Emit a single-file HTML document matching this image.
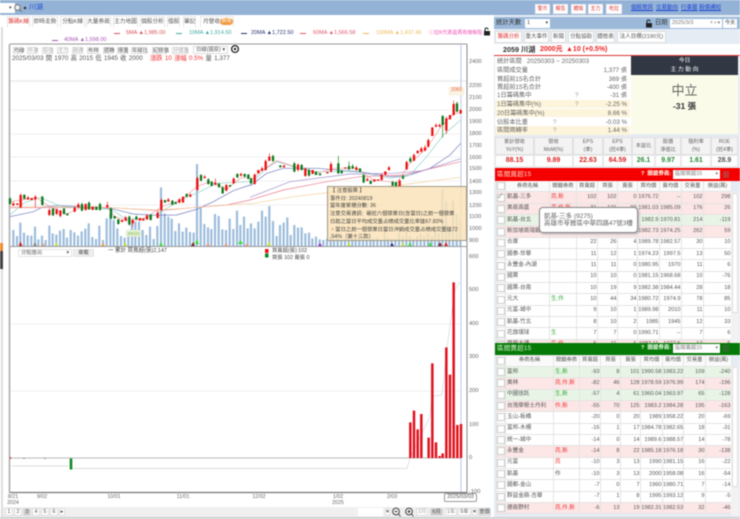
<!DOCTYPE html>
<html lang="zh-Hant"><head><meta charset="utf-8"><title>川湖</title>
<style>
html,body{margin:0;padding:0;width:740px;height:519px;overflow:hidden;background:#fff}
body{position:relative;font-family:"Liberation Sans","Noto Sans CJK TC",sans-serif;font-size:6px;color:#444;filter:blur(.4px)}
.a,.t{position:absolute}
.t{white-space:nowrap;line-height:10px}
.b{position:absolute;background:#fff;border:1px solid #ddd;box-sizing:border-box;text-align:center;line-height:6px;font-size:5.3px;color:#555;white-space:nowrap}
.m{position:absolute;white-space:nowrap;top:29px;font-size:5.5px;line-height:8px}
.m s{position:absolute;left:0;top:3.5px;width:6px;height:1px;background:currentColor}
table{position:absolute;border-collapse:collapse;table-layout:fixed;font-size:5.6px;color:#555;background:#fff}
td,th{border:1px solid #e4e4e4;padding:0 1px;overflow:hidden;white-space:nowrap;font-weight:normal;height:11.35px;line-height:9px;box-sizing:border-box}
th{text-align:center;font-size:5.3px;background:#fafafa;padding:0}
td.n{text-align:right;padding:0 .5px 0 0}td.c{padding:0}
.k{display:block;width:6px;height:6px;border:1px solid #ccc;background:#fff;margin:0 auto}
.p td{background:#fde6e6}.g td{background:#e8f5e6}
.r{color:#e33}.gr{color:#3a3}
.s{position:absolute;left:495px;width:135px;height:8.7px;line-height:9px;font-size:6.2px;color:#666}
.s i{position:absolute;left:2px;font-style:normal}.s b{position:absolute;right:3px;font-weight:normal}.s u{position:absolute;left:58px;text-decoration:none;color:#999}
.y{background:#fdf4dc}
.h{position:absolute;top:137px;height:18px;background:#f3f3f3;border:1px solid #e0e0e0;box-sizing:border-box;text-align:center;font-size:5.2px;line-height:7.5px;color:#666;padding-top:1px}
.v{position:absolute;top:155px;height:12px;background:#fff;border:1px solid #e8e8e8;box-sizing:border-box;text-align:center;font-size:7px;font-weight:bold;line-height:10px}
.tab{position:absolute;top:16px;height:11px;line-height:11px;background:#fff;border:1px solid #e5e5e5;border-bottom:0;box-sizing:border-box;text-align:center;font-size:5.7px;color:#555;white-space:nowrap}
.tr{position:absolute;top:31px;height:12px;line-height:11px;background:#fff;border:1px solid #ddd;box-sizing:border-box;text-align:center;font-size:5.5px;color:#555;white-space:nowrap}
.ax{position:absolute;left:469px;font-size:5.7px;line-height:8px;color:#666}
.ds{position:absolute;font-size:5.3px;line-height:6px;color:#666;text-align:center}
.bt{position:absolute;top:4px;height:10px;line-height:9px;background:#fff;text-align:center;font-size:5px;color:#d33;border:1px solid #eee;box-sizing:border-box}
.l{position:absolute;top:4px;font-size:5.5px;line-height:9px;color:#1a3fd0;text-decoration:underline;white-space:nowrap}
</style></head><body>

<!-- top bar -->
<div class="a" style="left:0;top:0;width:740px;height:15px;background:#93b2d6"></div>
<div class="a" style="left:0;top:3px;width:15px;height:10px;background:#fff"></div>
<div class="t" style="left:9px;top:3px;font-size:5px">▾</div>
<svg class="a" style="left:13px;top:3px" width="14" height="10"><circle cx="4.5" cy="4.5" r="2.8" fill="#eee" stroke="#777"/><path d="M6.500 6.500L9 9" stroke="#777"/><path d="M10.500 5h3M12 3.500v3" stroke="#333"/></svg>
<div class="t" style="left:29px;top:3px;font-size:7px;color:#1f4fd8;line-height:10px">川湖</div>
<div class="bt" style="left:535px;width:15px">警示</div>
<div class="bt" style="left:553px;width:15px">報告</div>
<div class="bt" style="left:571px;width:15px">體檢</div>
<div class="bt" style="left:588px;width:15px">主力</div>
<div class="bt" style="left:606px;width:16px">吃拉</div>
<div class="l" style="left:631px">個股資訊</div>
<div class="l" style="left:656px">交易動向</div>
<div class="l" style="left:681px">行事曆</div>
<div class="l" style="left:699px">股價通知</div>

<!-- left tabs -->
<div class="tab" style="left:7px;width:23px;color:#d33">籌碼K線</div>
<div class="tab" style="left:32px;width:26px">即時走勢</div>
<div class="tab" style="left:60px;width:25px">分點K線</div>
<div class="tab" style="left:86px;width:25px">大量券商</div>
<div class="tab" style="left:113px;width:25px">主力地圖</div>
<div class="tab" style="left:140px;width:25px">個股分析</div>
<div class="tab" style="left:167px;width:13px">借股</div>
<div class="tab" style="left:183px;width:13px">筆記</div>
<div class="tab" style="left:200px;width:34px;text-align:left;padding-left:2px">月營收</div>
<div class="a" style="left:220px;top:18px;width:13px;height:7px;border-radius:4px;background:#f29a3c;color:#fff;font-size:5px;line-height:7px;text-align:center">新增</div>

<div class="a" style="left:1px;top:27px;width:2px;height:492px;background:#ddd"></div>
<div class="a" style="left:0;top:243px;width:3px;height:8px;background:#ee8a2c"></div>
<div class="a" style="left:0;top:251px;width:3px;height:18px;background:#444"></div>

<!-- MA legend -->
<div class="m" style="left:114px;color:#d8505a;padding-left:12px"><s></s>5MA ▲1,985.00</div>
<div class="m" style="left:176px;color:#3fa9a0;padding-left:13px"><s></s>10MA ▲1,914.50</div>
<div class="m" style="left:241px;color:#27306e;padding-left:10px"><s></s>20MA ▲1,722.50</div>
<div class="m" style="left:300px;color:#e2566c;padding-left:13px"><s></s>60MA ▲1,566.58</div>
<div class="m" style="left:363px;color:#eeb957;padding-left:13px"><s></s>100MA ▲1,437.45</div>
<div class="m" style="left:429px;color:#ee4fb3;font-size:5px">ⓘ拉K代表盈再有做帳點</div>
<svg class="a" style="left:483px;top:27px" width="8" height="9"><path d="M2 4V2.500a1.500 1.500 0 0 1 3 0" fill="none" stroke="#222"/><rect x="1" y="4" width="6" height="4.500" fill="#222"/></svg>
<div class="m" style="left:52px;top:36px;color:#a855b5;padding-left:12px"><s></s>40MA ▲1,598.00</div>

<!-- toolbar -->
<div class="b" style="left:13px;top:47px;width:10px;height:7px">均線</div>
<div class="b" style="left:27px;top:47px;width:10px;height:7px;color:#aaa">外資</div>
<div class="b" style="left:42px;top:47px;width:11px;height:7px;color:#aaa">投信</div>
<div class="b" style="left:57px;top:47px;width:11px;height:7px;color:#aaa">主力</div>
<div class="b" style="left:72px;top:47px;width:11px;height:7px;color:#aaa">融資</div>
<div class="b" style="left:87px;top:47px;width:12px;height:7px">布林</div>
<div class="b" style="left:103px;top:47px;width:10px;height:7px">週轉</div>
<div class="b" style="left:117px;top:47px;width:11px;height:7px">爆量</div>
<div class="b" style="left:131px;top:47px;width:16px;height:7px">年線比</div>
<div class="b" style="left:152px;top:47px;width:15px;height:7px">紀錄價</div>
<div class="b" style="left:172px;top:47px;width:16px;height:7px;color:#aaa">分價量</div>
<div class="b" style="left:193px;top:46px;width:35px;height:8px;text-align:left;padding-left:2px">日線(還原)<span style="position:absolute;right:2px;top:0">▾</span></div>
<svg class="a" style="left:230px;top:44px" width="10" height="10"><circle cx="5" cy="5" r="3.400" fill="none" stroke="#222" stroke-width="1.300"/><circle cx="5" cy="5" r="1.200" fill="#222"/></svg>
<div class="t" style="left:12px;top:54px;font-size:6.300px;color:#555;word-spacing:.5px">2025/03/03 開 1970 高 2015 低 1945 收 2000 <span style="color:#e33;margin-left:5px">漲跌 10 漲幅 0.5%</span> 量 1,377</div>

<!-- chart svg -->
<svg class="a" style="left:0;top:0" width="492" height="519" fill="none">
<path d="M10 110H460M10 134H460M10 157H460M10 181H460M10 205H460M10 324H460M10 391H460" stroke="#f1f1f1"/>
<path d="M10 81H467" stroke="#ececec" stroke-width="1.500"/>
<path d="M10 44H467" stroke="#999"/>
<path d="M9.500 44V493" stroke="#aaa" stroke-width="1.500"/>
<path d="M467 44V493" stroke="#888"/>
<path d="M461 44V493" stroke="#bcc8ea"/>
<path d="M10 246.500H467" stroke="#999"/>
<path d="M10 492.500H467" stroke="#777" stroke-width="1.200"/>

<!-- left half in zoom coords -->
<g transform="translate(0 60) scale(.33333)">
<path stroke="#9cbcdc" stroke-width="6.500" d="M40 558V510M51 558V528M61 558V488M72 558V518M83 558V526M94 558V527M105 558V500M115 558V538M126 558V527M137 558V540M148 558V497M158 558V520M169 558V524M180 558V512M191 558V507M201 558V533M212 558V510M223 558V517M234 558V527M245 558V514M256 558V506M266 558V490M277 558V531M288 558V537M298 558V497M309 558V540M320 558V475M331 558V460M341 558V480M352 558V505M363 558V528M374 558V533M385 558V515M396 558V490M406 558V485M417 558V485M428 558V510M439 558V525M450 558V500M461 558V537M472 558V498M483 558V382M494 558V460M505 558V470M515 558V476M526 558V513M537 558V490M548 558V515M559 558V503M570 558V516M581 558V518M591 558V312M602 558V440M613 558V492M624 558V502M634 558V507M645 558V462M656 558V468M667 558V508M678 558V510M689 558V476M700 558V507M711 558V452M721 558V495M732 558V470M743 558V505"/>
<path stroke="#7278c0" stroke-width="2" d="M30 470L100 455L130 440L180 437L250 440L330 445L400 462L470 466L530 465L590 448L640 425L700 392L750 375"/>
<path stroke="#ec7e92" stroke-width="2" d="M30 443L330 443L480 452L590 442L680 435L750 420"/>
<path stroke="#f5cf97" stroke-width="2" d="M30 440L330 443L470 450L600 442L750 430"/>
<path stroke="#8fd0c4" stroke-width="2" d="M30 465L70 430L120 412L180 438L250 445L330 447L380 478L440 475L480 458L540 420L600 395L650 370L750 365"/>
<path stroke="#f09aa0" stroke-width="2" d="M30 425L62 420L110 414L150 440L200 462L250 440L320 442L345 470L390 485L440 472L485 440L545 420L590 380L630 365L680 388L720 355L750 350"/>
<path stroke="#e22" stroke-width="2" d="M40 425V438M62 400V445M84 408V420M106 405V442M148 445V468M170 445V465M181 450V472M224 438V457M235 428V444M257 430V452M322 425V442M377 468V484M398 476V500M441 462V480M473 452V476M484 415V452M505 414V426M538 414V430M571 400V412M592 350V392M614 345V356M646 355V376M679 372V394M701 352V372M723 338V350"/>
<path stroke="#181" stroke-width="2" d="M30 412V434M127 408V437M159 444V468M192 444V464M246 428V454M267 424V450M300 428V452M333 442V478M355 476V494M388 466V496M409 466V480M452 462V482M517 420V436M560 400V412M603 342V364M625 354V374M668 378V402M712 340V354M734 340V352"/>
<path stroke="#e11" stroke-width="7" d="M40 430V436M52 430V435M62 405V442M84 412V418M95 414V420M106 410V418M148 450V465M170 448V462M181 452V468M224 443V455M235 433V442M257 432V450M278 440V450M322 435V442M366 480V486M377 472V482M398 480V490M420 474V482M430 476V482M441 466V478M473 458V474M484 420V450M505 418V424M538 418V428M549 410V428M571 404V410M592 354V390M614 350V354M646 368V374M679 375V392M701 356V370M723 342V347"/>
<path stroke="#0c7a1e" stroke-width="7" d="M30 415V432M73 404V417M127 410V435M159 446V466M192 446V462M202 460V466M246 432V452M267 428V448M289 440V450M300 432V450M333 445V475M344 468V476M355 478V492M388 470V494M409 470V478M452 464V480M495 420V428M517 422V434M527 426V432M560 402V410M603 345V362M625 358V372M635 365V378M657 370V382M668 382V400M690 375V380M712 342V352M734 342V350M745 343V357"/>
<rect x="378" y="510" width="46" height="20" rx="6" fill="#e8f5d8" stroke="#c8dcb0"/>
<text x="401" y="525" font-size="13" fill="#7fae5a" text-anchor="middle" stroke="none" font-family="Liberation Sans">89020</text>
</g>

<!-- right half in zoom coords -->
<g transform="translate(250 60) scale(.33333)">
<path stroke="#9cbcdc" stroke-width="6.500" d="M3 558V490M14 558V505M25 558V485M36 558V452M47 558V470M58 558V438M69 558V483M80 558V528M90 558V495M101 558V488M112 558V472M122 558V525M133 558V495M144 558V503M155 558V502M166 558V520M177 558V518M187 558V535M198 558V530M209 558V538M220 558V540M231 558V536M242 558V530M252 558V538M263 558V534M274 558V540M285 558V536M296 558V528M307 558V536M317 558V534M328 558V536M339 558V534M350 558V538M361 558V530M371 558V535M382 558V533M393 558V540M404 558V500M414 558V532M425 558V535M436 558V538M447 558V518M458 558V530M469 558V516M480 558V528M490 558V536M501 558V528M512 558V522M523 558V528M534 558V520M545 558V530M555 558V502M566 558V520M577 558V388M588 558V425M598 558V510M609 558V422M620 558V462M631 558V480"/>
<path stroke="#7278c0" stroke-width="2" d="M0 378L50 340L100 325L200 325L330 335L420 350L470 348L540 325L600 285L632 250"/>
<path stroke="#ec7e92" stroke-width="2" d="M0 420L100 390L230 365L330 350L460 345L632 305"/>
<path stroke="#a58bd0" stroke-width="2" d="M0 412L120 365L300 342L430 340L520 332L632 296"/>
<path stroke="#f5cf97" stroke-width="2" d="M0 432L130 410L300 390L450 375L632 352"/>
<path stroke="#8fd0c4" stroke-width="2" d="M0 372L50 325L80 305L130 320L200 335L280 335L330 337L420 355L480 345L530 290L580 225L632 180"/>
<path stroke="#f09aa0" stroke-width="2" d="M0 365L30 335L80 302L150 325L200 340L250 325L320 325L370 360L440 368L480 310L530 265L570 205L610 160L632 160"/>
<path stroke="#e22" stroke-width="2" d="M14 340V374M36 320V334M47 298V332M58 280V304M144 310V334M166 322V350M243 305V338M319 318V332M352 352V364M395 340V362M417 318V332M449 358V380M470 302V330M492 280V304M514 260V278M525 255V274M535 236V262M558 190V202M569 190V202M589 170V222M611 122V167M632 148V162"/>
<path stroke="#181" stroke-width="2" d="M3 352V374M69 284V306M133 306V337M155 312V332M177 326V350M265 288V342M297 305V330M308 312V328M341 342V370M428 362V378M459 344V358M481 290V308M578 165V233M621 125V157"/>
<path stroke="#e11" stroke-width="7" d="M14 344V372M25 330V340M36 325V332M47 303V330M58 290V302M102 316V322M144 314V330M166 326V348M188 330V342M232 336V340M243 312V335M286 322V326M319 322V330M352 357V362M373 358V365M384 358V362M395 344V360M406 334V345M417 322V330M449 362V378M470 306V328M492 285V302M503 272V280M514 265V275M525 262V272M535 240V260M547 202V228M558 195V200M569 195V200M589 175V212M600 165V178M611 132V165M632 150V160"/>
<path stroke="#0c7a1e" stroke-width="7" d="M3 355V370M69 288V303M91 316V322M133 310V335M155 315V330M177 330V347M198 335V345M210 340V346M265 310V340M275 332V340M297 318V328M308 318V325M330 325V336M341 345V367M362 362V372M428 366V376M438 366V380M459 348V356M481 295V305M578 168V195M621 130V155"/>
<rect x="597" y="83" width="45" height="22" rx="3" fill="#fbf3e2" stroke="#f1e3c8"/>
</g>

<!-- markers -->
<g stroke="none">
<path fill="#c22" d="M18.500 246L20.500 241.500L22.500 246Z"/>
<path fill="#888" d="M33 246L35 242L37 246Z"/>
<path fill="#e98" d="M41 246L43 243L45 246Z"/>
<path fill="#bde24e" d="M54.500 246L56.500 242L58.500 246Z"/>
<path fill="#eea03a" d="M101 246L103 243L105 246Z"/>
<path fill="#bde24e" d="M123 246L125 242L127 246Z"/>
<path fill="#3ddc3d" d="M159 246L161 242L163 246Z"/>
<path fill="#722" d="M191 246L193 242L195 246Z"/>
<path fill="#3ddc3d" d="M195 244L197 239L199 244Z"/>
<path fill="#e98" d="M206 246L208 243L210 246Z"/>
<path fill="#e98" d="M224 246L226 243L228 246Z"/>
<path fill="#3ddc3d" d="M238 244L240.500 240L243 244Z"/>
<path fill="#e98" d="M245 246L247 243L249 246Z"/>
<path fill="#bde24e" d="M267 246L269 241L271 246Z"/>
<path fill="#92d" d="M318 246L320 243L322 246Z"/>
<path fill="#bde24e" d="M347 246L349 242L351 246Z"/>
<path fill="#228" d="M390 246L392 243L394 246Z"/>
<path fill="#bde24e" d="M401 246L403 242L405 246Z"/>
<path fill="#3ddc3d" d="M408 246L410 242L412 246Z"/>
<path fill="#3ddc3d" d="M428 246L430 242L432 246Z"/>
<path fill="#722" d="M438 246L440 242L442 246Z"/>
<path fill="#d22" d="M444 246L446 242L448 246Z"/>
</g>

<!-- volume panel -->
<path d="M10 458H461" stroke="#bbb"/>
<path stroke="#dcdcdc" d="M12 466H68M72 468.500H407"/>
<path stroke="#d5d5d5" transform="translate(380 270) scale(.33333)" stroke-width="2" d="M80 597L90 565L130 480L150 440L155 380L185 375L190 340L200 240L215 130L225 60L240 35"/>
<path stroke="#d22" d="M10.500 457V459"/>
<path stroke="#888" d="M24 458V459M45 458V459" stroke-width="1.500"/>
<path stroke="#118a22" stroke-width="2.600" d="M71 458.500V469.500"/>
<g transform="translate(380 270) scale(.33333)">
<path stroke="#e2111c" stroke-width="7.500" d="M91 564V457M102 564V422M113 564V478M124 564V432M146 564V503M157 564V280M168 564V517M179 564V558M188 564V550M199 564V232M210 564V314M221 564V37M232 564V465M243 564V462"/>
</g>

<!-- legend icon -->
<rect x="265" y="249" width="3.500" height="4" fill="#e11"/><rect x="265" y="253.500" width="3.500" height="4" fill="#0a8a20"/>
</svg>

<div class="t" style="left:451px;top:85px;font-size:5px;color:#e8624a">2065</div>

<!-- y axis -->
<div class="ax" style="top:58px">2400</div><div class="ax" style="top:82px">2200</div><div class="ax" style="top:94px">2100</div><div class="ax" style="top:106px">2000</div><div class="ax" style="top:118px">1900</div><div class="ax" style="top:130px">1800</div><div class="ax" style="top:142px">1700</div><div class="ax" style="top:154px">1600</div><div class="ax" style="top:165px">1500</div><div class="ax" style="top:178px">1400</div><div class="ax" style="top:189px">1300</div><div class="ax" style="top:202px">1200</div><div class="ax" style="top:213px">1100</div><div class="ax" style="top:225px">1000</div><div class="ax" style="top:237px">900</div><div class="ax" style="top:253px">600</div>
<div class="ax" style="top:286px">500</div><div class="ax" style="top:320px">400</div><div class="ax" style="top:353px">300</div><div class="ax" style="top:387px">200</div><div class="ax" style="top:421px">100</div><div class="ax" style="top:454px">0</div><div class="ax" style="top:488px">-100</div>

<!-- note tooltip -->
<div class="a" style="left:327px;top:186px;width:140px;height:55px;background:rgba(250,226,184,.84);border:1px solid #a09a86;box-sizing:border-box;padding:1px 2px;font-size:5.300px;line-height:7.700px;color:#444;overflow:hidden;white-space:nowrap">【 注意股票 】<br>事件日: 20240819<br>當年度累積分數: 36<br>注意交易資訊:&nbsp; 最近六個營業日(含當日)之前一個營業<br>日起之當日平均成交量占總成交量比率達67.83%<br>，當日之前一個營業日當日沖銷成交量占總成交量達72<br>.54%（第十三款）</div>

<!-- below chart -->
<div class="a" style="left:18px;top:249px;width:54px;height:8px;background:#fff;border:1px solid #e3e3e3;box-sizing:border-box;font-size:5.300px;line-height:6px;padding-left:2px;color:#666">分點進出<span style="position:absolute;right:2px">▾</span></div>
<div class="a" style="left:73px;top:249px;width:21px;height:8px;background:#eee;border:1px solid #e5e5e5;box-sizing:border-box;font-size:5.300px;line-height:6px;text-align:center;color:#555">複載</div>
<div class="t" style="left:108px;top:246px;font-size:5.500px;color:#444">一 累計 買賣超(張)2,147</div>
<div class="t" style="left:272px;top:246px;font-size:5.300px;color:#444">買賣超(張):102</div>
<div class="t" style="left:272px;top:253px;font-size:5.300px;color:#444">買張 102 賣張 0</div>

<!-- x axis -->
<div class="ds" style="left:6px;top:494px;width:14px">8/21<br>2024</div>
<div class="ds" style="left:34px;top:494px;width:16px">9/02</div>
<div class="ds" style="left:105px;top:494px;width:18px">10/01</div>
<div class="ds" style="left:174px;top:494px;width:18px">11/01</div>
<div class="ds" style="left:250px;top:494px;width:18px">12/02</div>
<div class="ds" style="left:330px;top:494px;width:16px">1/02<br>2025</div>
<div class="ds" style="left:384px;top:494px;width:16px">2/03</div>
<div class="a" style="left:444px;top:493px;width:33px;height:9px;background:#fff;border:1px solid #999;border-radius:2px;box-sizing:border-box;font-size:5.300px;line-height:7px;text-align:center;color:#555">2025/03/03</div>

<!-- bottom bar -->
<div class="a" style="left:3px;top:507px;width:487px;height:10px;background:#f0f0f0"></div>
<div class="a" style="left:0;top:517px;width:740px;height:2px;background:#d0d0d0"></div>
<div class="b" style="left:5px;top:508px;width:8px;height:8px">1</div>
<div class="b" style="left:14px;top:508px;width:8px;height:8px">2</div>
<div class="b" style="left:23px;top:508px;width:8px;height:8px;background:#ccc">3</div>
<div class="b" style="left:32px;top:508px;width:8px;height:8px">4</div>
<div class="b" style="left:41px;top:508px;width:8px;height:8px">5</div>
<div class="b" style="left:50px;top:508px;width:8px;height:8px">6</div>
<div class="b" style="left:59px;top:508px;width:6px;height:8px">▸</div>
<div class="a" style="left:358px;top:508px;width:25px;height:8px;background:#fff"></div>
<div class="b" style="left:385px;top:508px;width:5px;height:8px">▾</div>
<svg class="a" style="left:391px;top:507px" width="24" height="10" fill="none" stroke="#444"><circle cx="5" cy="4.500" r="3.400"/><path d="M3.500 4.500h3M7.500 7L9.500 9.500"/><circle cx="18" cy="4.500" r="3.400"/><path d="M16.500 4.500h3M18 3v3M20.500 7L22.500 9.500"/></svg>
<div class="b" style="left:416px;top:508px;width:12px;height:8px;color:#aaa">3月</div>
<div class="b" style="left:430px;top:508px;width:13px;height:8px;background:#ccc">6月</div>
<div class="b" style="left:445px;top:508px;width:12px;height:8px;color:#888">1年</div>
<div class="b" style="left:458px;top:508px;width:13px;height:8px">5年</div>
<div class="b" style="left:472px;top:508px;width:5px;height:8px">▾</div>
<div class="b" style="left:478px;top:508px;width:13px;height:8px;background:#ddd">查價</div>

<!-- right panel -->
<div class="a" style="left:494px;top:15px;width:246px;height:502px;background:#e6ecf4"></div>
<div class="a" style="left:494px;top:17px;width:246px;height:12px;background:#9cb9da"></div>
<div class="t" style="left:496px;top:18px;font-size:6.300px;color:#333">統計天數</div>
<div class="a" style="left:525px;top:19px;width:25px;height:9px;background:#fff;font-size:5.500px;line-height:9px;padding-left:2px;box-sizing:border-box">1<span style="position:absolute;right:2px;font-size:5px">▾</span></div>
<svg class="a" style="left:645px;top:19px" width="8" height="9"><path d="M2 4V2.500a1.500 1.500 0 0 1 3 0" fill="none" stroke="#222"/><rect x="1" y="4" width="6" height="4.500" fill="#222"/></svg>
<div class="t" style="left:655px;top:18px;font-size:6.300px;color:#333">日期</div>
<div class="a" style="left:670px;top:19px;width:52px;height:9px;background:#fff;font-size:5.500px;line-height:9px;padding-left:2px;box-sizing:border-box;color:#777">2025/3/3<span style="position:absolute;right:2px;font-size:5px">× ▪ ▾</span></div>
<div class="a" style="left:723px;top:19px;width:14px;height:9px;background:#fff;font-size:5.300px;line-height:9px;text-align:center">今天</div>

<div class="tr" style="left:495px;width:27px;color:#d33">籌碼分析</div>
<div class="tr" style="left:524px;width:25px">重大事件</div>
<div class="tr" style="left:551px;width:15px">新聞</div>
<div class="tr" style="left:568px;width:26px">分點協助</div>
<div class="tr" style="left:596px;width:19px">體檢表</div>
<div class="tr" style="left:617px;width:49px">法人目標(2190元)</div>

<div class="a" style="left:494px;top:44px;width:246px;height:11px;background:#fff"></div>
<div class="t" style="left:503px;top:44px;font-size:7.200px;line-height:11px;color:#333;font-weight:bold">2059 川湖</div>
<div class="t" style="left:540px;top:44px;font-size:7px;line-height:11px;color:#e22;font-weight:bold">2000元</div>
<div class="t" style="left:566px;top:44px;font-size:7px;line-height:11px;color:#e22;font-weight:bold">▲10 (+0.5%)</div>
<div class="a" style="left:494px;top:55px;width:246px;height:1px;background:#d33"></div>

<div class="a" style="left:495px;top:56px;width:136px;height:78px;background:#fff"></div>
<div class="t" style="left:497px;top:56.500px;font-size:6.200px;color:#666">統計區間&nbsp; &nbsp;20250303 ~ 20250303</div>
<div class="s" style="top:65.500px"><i>區間成交量</i><b>1,377 張</b></div>
<div class="s" style="top:74.500px"><i>買超前15名合計</i><b>369 張</b></div>
<div class="s" style="top:83px"><i>賣超前15名合計</i><b>-400 張</b></div>
<div class="s" style="top:91px"><i>1日籌碼集中</i><u style="left:80px">?</u><b>-31 張</b></div>
<div class="s y" style="top:99.500px"><i>1日籌碼集中(%)</i><u style="left:80px">?</u><b>-2.25 %</b></div>
<div class="s y" style="top:108.500px"><i>20日籌碼集中(%)</i><b>8.66 %</b></div>
<div class="s" style="top:117.500px"><i>佔股本比重</i><u>?</u><b>-0.03 %</b></div>
<div class="s y" style="top:126px"><i>區間周轉率</i><u>?</u><b>1.44 %</b></div>

<div class="a" style="left:631px;top:56px;width:107px;height:78px;background:#fafbe9"></div>
<div class="a" style="left:631px;top:56px;width:107px;height:19px;background:#323843;color:#fff;text-align:center;font-size:5.800px;line-height:9px;padding-top:1px;box-sizing:border-box">今日<br>主 力 動 向</div>
<div class="t" style="left:631px;width:107px;text-align:center;top:82px;font-size:13px;line-height:18px;color:#666">中立</div>
<div class="t" style="left:631px;width:107px;text-align:center;top:100px;font-size:8.500px;line-height:12px;color:#333;font-weight:bold">-31 張</div>

<div class="h" style="left:495px;width:39px">累計營收<br>YoY(%)</div>
<div class="h" style="left:534px;width:39px">營收<br>MoM(%)</div>
<div class="h" style="left:573px;width:30px">EPS<br>(季)</div>
<div class="h" style="left:603px;width:29px">EPS<br>(近4季)</div>
<div class="h" style="left:632px;width:23px;line-height:16px;padding:0">本益比</div>
<div class="h" style="left:655px;width:26px">股價<br>淨值比</div>
<div class="h" style="left:681px;width:30px">殖利率<br>(%)</div>
<div class="h" style="left:711px;width:27px">ROE<br>(近4季)</div>
<div class="v" style="left:495px;width:39px;color:#d22">88.15</div>
<div class="v" style="left:534px;width:39px;color:#d22">9.89</div>
<div class="v" style="left:573px;width:30px;color:#d22">22.63</div>
<div class="v" style="left:603px;width:29px;color:#d22">64.59</div>
<div class="v" style="left:632px;width:23px;color:#2a8a3a">26.1</div>
<div class="v" style="left:655px;width:26px;color:#2a8a3a">9.97</div>
<div class="v" style="left:681px;width:30px;color:#2a8a3a">1.61</div>
<div class="v" style="left:711px;width:27px;color:#555">28.9</div>

<!-- red table -->
<table style="left:496px;top:180px;width:235px">
<colgroup><col style="width:9px"><col style="width:44px"><col style="width:27px"><col style="width:21px"><col style="width:20px"><col style="width:20px"><col style="width:22px"><col style="width:22px"><col style="width:22px"><col style="width:28px"></colgroup>
<tr><th class="c"><span class="k"></span></th><th>券商名稱</th><th>關鍵券商</th><th>買賣超</th><th>買張</th><th>賣張</th><th>買均價</th><th>賣均價</th><th>交易量</th><th>損益(萬)</th></tr>
<tr class="p"><td class="c"><span class="k" style="font-size:6px;line-height:5px;color:#666">✓</span></td><td>凱基-三多</td><td class="r">亮,新</td><td class="n">102</td><td class="n">102</td><td class="n">0</td><td class="n">1976.72</td><td class="n">--</td><td class="n">102</td><td class="n">298</td></tr>
<tr class="p"><td class="c"><span class="k"></span></td><td>美商高盛</td><td class="r">亮,作,新</td><td class="n">31</td><td class="n">121</td><td class="n">90</td><td class="n">1981.03</td><td class="n">1985.09</td><td class="n">176</td><td class="n">26</td></tr>
<tr class="g"><td class="c"><span class="k"></span></td><td>凱基-台北</td><td class="gr">生,新</td><td class="n">28</td><td class="n">121</td><td class="n">93</td><td class="n">1982.9</td><td class="n">1970.81</td><td class="n">214</td><td class="n">-119</td></tr>
<tr class="p"><td class="c"><span class="k"></span></td><td>新加坡商瑞銀</td><td class="r">亮</td><td class="n">24</td><td class="n">143</td><td class="n">119</td><td class="n">1982.73</td><td class="n">1974.25</td><td class="n">262</td><td class="n">59</td></tr>
<tr><td class="c"><span class="k"></span></td><td>合庫</td><td></td><td class="n">22</td><td class="n">26</td><td class="n">4</td><td class="n">1989.78</td><td class="n">1982.57</td><td class="n">30</td><td class="n">10</td></tr>
<tr><td class="c"><span class="k"></span></td><td>國泰-世華</td><td></td><td class="n">11</td><td class="n">12</td><td class="n">1</td><td class="n">1974.23</td><td class="n">1997.5</td><td class="n">13</td><td class="n">50</td></tr>
<tr><td class="c"><span class="k"></span></td><td>永豐金-內湖</td><td></td><td class="n">11</td><td class="n">11</td><td class="n">0</td><td class="n">1980.95</td><td class="n">1970</td><td class="n">11</td><td class="n">6</td></tr>
<tr><td class="c"><span class="k"></span></td><td>國票</td><td></td><td class="n">10</td><td class="n">10</td><td class="n">0</td><td class="n">1981.15</td><td class="n">1968.68</td><td class="n">10</td><td class="n">-76</td></tr>
<tr><td class="c"><span class="k"></span></td><td>國票-台南</td><td></td><td class="n">10</td><td class="n">19</td><td class="n">9</td><td class="n">1982.38</td><td class="n">1984.44</td><td class="n">28</td><td class="n">18</td></tr>
<tr><td class="c"><span class="k"></span></td><td>元大</td><td class="gr">生,作</td><td class="n">10</td><td class="n">44</td><td class="n">34</td><td class="n">1980.72</td><td class="n">1974.9</td><td class="n">78</td><td class="n">85</td></tr>
<tr><td class="c"><span class="k"></span></td><td>元富-城中</td><td></td><td class="n">9</td><td class="n">10</td><td class="n">1</td><td class="n">1989.98</td><td class="n">2010</td><td class="n">11</td><td class="n">10</td></tr>
<tr><td class="c"><span class="k"></span></td><td>凱基-竹北</td><td></td><td class="n">8</td><td class="n">10</td><td class="n">2</td><td class="n">1985</td><td class="n">1945</td><td class="n">12</td><td class="n">33</td></tr>
<tr><td class="c"><span class="k"></span></td><td>花旗環球</td><td class="gr">生</td><td class="n">7</td><td class="n">7</td><td class="n">0</td><td class="n">1990.71</td><td class="n">--</td><td class="n">7</td><td class="n">6</td></tr>
<tr class="p"><td class="c"><span class="k"></span></td><td>摩根大通</td><td class="r">生,作</td><td class="n">5</td><td class="n">11</td><td class="n">6</td><td class="n">1982.11</td><td class="n">1977.5</td><td class="n">17</td><td class="n">5</td></tr>
</table>
<div class="a" style="left:731px;top:192px;width:8px;height:151px;background:#f2f2f2"></div>
<div class="a" style="left:732px;top:193px;width:6px;height:120px;background:#fff;border:1px solid #ddd;box-sizing:border-box"></div>

<!-- red header (after table) -->
<div class="a" style="left:495px;top:168px;width:245px;height:13px;background:#f40000"></div>
<div class="t" style="left:497px;top:169px;font-size:6.500px;color:#ffd9c8;line-height:11px;letter-spacing:.2px">區間買超15</div>
<div class="t" style="left:641px;top:170px;font-size:5.500px;color:#ffe;line-height:9px;font-weight:bold">?&nbsp; 關鍵券商:</div>
<div class="a" style="left:673px;top:170px;width:47px;height:9px;background:#fff;font-size:5.300px;line-height:9px;padding-left:2px;box-sizing:border-box;color:#777">區間買超15<span style="position:absolute;right:2px;font-size:5px">▾</span></div>
<div class="a" style="left:723px;top:171px;width:6px;height:7px;background:#c53333"></div>

<div class="a" style="left:539px;top:207px;width:99px;height:26px;background:#fff;border:1px solid #888;border-radius:4px;box-sizing:border-box;box-shadow:1px 1px 2px #aaa;font-size:6.500px;line-height:7.500px;color:#666;padding:4.500px 4px;white-space:nowrap;overflow:hidden">凱基-三多 (9275)<br>高雄市苓雅區中華四路47號3樓</div>

<!-- green table -->
<table style="left:496px;top:354.500px;width:235px">
<colgroup><col style="width:9px"><col style="width:48px"><col style="width:26px"><col style="width:21px"><col style="width:20px"><col style="width:20px"><col style="width:22px"><col style="width:21px"><col style="width:22px"><col style="width:26px"></colgroup>
<tr><th class="c"><span class="k"></span></th><th>券商名稱</th><th>關鍵券商</th><th>買賣超</th><th>買張</th><th>賣張</th><th>買均價</th><th>賣均價</th><th>交易量</th><th>損益(萬)</th></tr>
<tr class="g"><td class="c"><span class="k"></span></td><td>富邦</td><td class="gr">生,新</td><td class="n">-93</td><td class="n">8</td><td class="n">101</td><td class="n">1990.58</td><td class="n">1983.22</td><td class="n">109</td><td class="n">-240</td></tr>
<tr class="p"><td class="c"><span class="k"></span></td><td>美林</td><td class="r">亮,作,新</td><td class="n">-82</td><td class="n">46</td><td class="n">128</td><td class="n">1978.59</td><td class="n">1976.99</td><td class="n">174</td><td class="n">-196</td></tr>
<tr class="g"><td class="c"><span class="k"></span></td><td>中國信託</td><td class="gr">生,新</td><td class="n">-57</td><td class="n">4</td><td class="n">61</td><td class="n">1960.04</td><td class="n">1963.97</td><td class="n">65</td><td class="n">-128</td></tr>
<tr class="p"><td class="c"><span class="k"></span></td><td>台灣摩根士丹利</td><td class="r">作,新</td><td class="n">-55</td><td class="n">70</td><td class="n">125</td><td class="n">1983.2</td><td class="n">1984.28</td><td class="n">195</td><td class="n">-163</td></tr>
<tr><td class="c"><span class="k"></span></td><td>玉山-板橋</td><td></td><td class="n">-20</td><td class="n">0</td><td class="n">20</td><td class="n">1989</td><td class="n">1958.22</td><td class="n">20</td><td class="n">-69</td></tr>
<tr><td class="c"><span class="k"></span></td><td>富邦-木柵</td><td></td><td class="n">-16</td><td class="n">1</td><td class="n">17</td><td class="n">1984.78</td><td class="n">1982.65</td><td class="n">18</td><td class="n">-31</td></tr>
<tr><td class="c"><span class="k"></span></td><td>統一-城中</td><td></td><td class="n">-14</td><td class="n">0</td><td class="n">14</td><td class="n">1989.6</td><td class="n">1988.57</td><td class="n">14</td><td class="n">-78</td></tr>
<tr class="p"><td class="c"><span class="k"></span></td><td>永豐金</td><td class="r">亮,新</td><td class="n">-14</td><td class="n">8</td><td class="n">22</td><td class="n">1985.18</td><td class="n">1976.18</td><td class="n">30</td><td class="n">-138</td></tr>
<tr><td class="c"><span class="k"></span></td><td>元富</td><td class="r">亮</td><td class="n">-10</td><td class="n">3</td><td class="n">13</td><td class="n">1990</td><td class="n">1981.15</td><td class="n">16</td><td class="n">-22</td></tr>
<tr><td class="c"><span class="k"></span></td><td>凱基</td><td>作</td><td class="n">-10</td><td class="n">3</td><td class="n">13</td><td class="n">2000</td><td class="n">1958.08</td><td class="n">16</td><td class="n">-54</td></tr>
<tr><td class="c"><span class="k"></span></td><td>國都-金山</td><td></td><td class="n">-7</td><td class="n">0</td><td class="n">7</td><td class="n">1960</td><td class="n">1980.71</td><td class="n">7</td><td class="n">-14</td></tr>
<tr><td class="c"><span class="k"></span></td><td>群益金鼎-吉華</td><td></td><td class="n">-7</td><td class="n">1</td><td class="n">8</td><td class="n">1995</td><td class="n">1993.12</td><td class="n">9</td><td class="n">-5</td></tr>
<tr class="p"><td class="c"><span class="k"></span></td><td>德商野村</td><td class="r">亮,作,新</td><td class="n">-6</td><td class="n">13</td><td class="n">19</td><td class="n">1982.31</td><td class="n">1982.53</td><td class="n">32</td><td class="n">-46</td></tr>
</table>
<div class="a" style="left:731px;top:366px;width:8px;height:150px;background:#f2f2f2"></div>
<div class="a" style="left:732px;top:367px;width:6px;height:120px;background:#fff;border:1px solid #ddd;box-sizing:border-box"></div>

<!-- green header -->
<div class="a" style="left:495px;top:343px;width:245px;height:12px;background:#067a06"></div>
<div class="t" style="left:497px;top:343px;font-size:6.500px;color:#d8f0d0;line-height:11px;letter-spacing:.2px">區間賣超15</div>
<div class="t" style="left:641px;top:344px;font-size:5.500px;color:#efe;line-height:9px;font-weight:bold">?&nbsp; 關鍵券商:</div>
<div class="a" style="left:673px;top:344px;width:47px;height:9px;background:#fff;font-size:5.300px;line-height:9px;padding-left:2px;box-sizing:border-box;color:#777">區間賣超15<span style="position:absolute;right:2px;font-size:5px">▾</span></div>
<div class="a" style="left:723px;top:345px;width:6px;height:7px;background:#2b6b2b"></div>

</body></html>
